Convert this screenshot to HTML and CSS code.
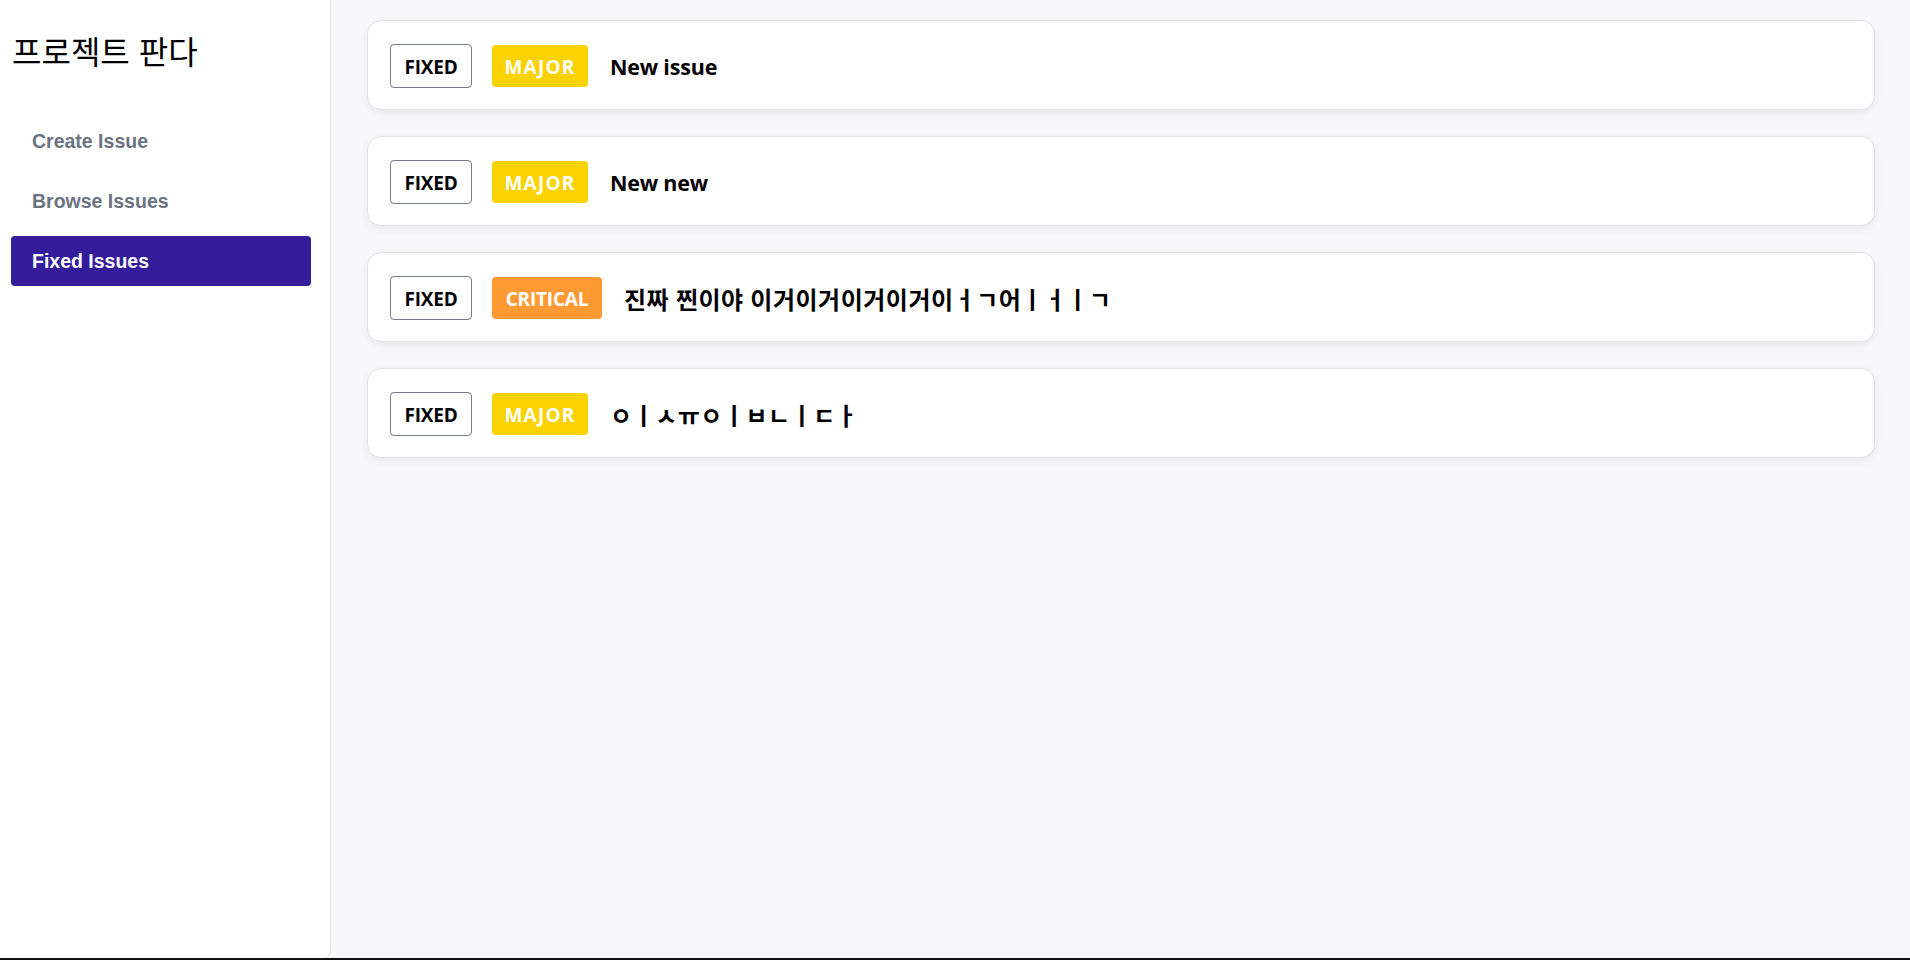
FILE: index.html
```html
<!DOCTYPE html>
<html lang="ko">
<head>
<meta charset="utf-8">
<title>프로젝트 판다</title>
<link rel="stylesheet" href="styles.css">
</head>
<body>
<div class="app">
  <aside class="sidebar">
    <h1 class="brand">프로젝트 판다</h1>
    <nav class="nav">
      <a class="nav-item">Create Issue</a>
      <a class="nav-item">Browse Issues</a>
      <a class="nav-item active">Fixed Issues</a>
    </nav>
  </aside>
  <main class="main">
    <div class="card">
      <span class="badge status">FIXED</span>
      <span class="badge major">MAJOR</span>
      <span class="title">New issue</span>
    </div>
    <div class="card">
      <span class="badge status">FIXED</span>
      <span class="badge major">MAJOR</span>
      <span class="title">New new</span>
    </div>
    <div class="card">
      <span class="badge status">FIXED</span>
      <span class="badge critical">CRITICAL</span>
      <span class="title ko">진짜 찐이야 이거이거이거이거이ㅓㄱ어ㅣㅓㅣㄱ</span>
    </div>
    <div class="card">
      <span class="badge status">FIXED</span>
      <span class="badge major">MAJOR</span>
      <span class="title ko">ㅇㅣㅅㅠㅇㅣㅂㄴㅣㄷㅏ</span>
    </div>
  </main>
</div>
<div class="bottom-rule"></div>
</body>
</html>
```

FILE: styles.css
```css
* { box-sizing: border-box; }
html, body { margin: 0; padding: 0; }
body {
  background: #f8f8fa;
  font-family: "Open Sans", "Noto Sans CJK KR", sans-serif;
  color: #000;
}
.app {
  display: flex;
  height: 958px;
}
.bottom-rule {
  height: 2px;
  background: #111;
}
.sidebar {
  width: 331px;
  flex: none;
  background: #fff;
  border-right: 1px solid #e2e3e8;
  border-bottom-right-radius: 8px;
  padding: 0 19px 0 11px;
}
.brand {
  margin: 31px 0 0 1px;
  font-family: "Noto Sans CJK KR", sans-serif;
  font-size: 32px;
  font-weight: 400;
  line-height: 38px;
  letter-spacing: 0;
}
.nav {
  margin-top: 47px;
  display: flex;
  flex-direction: column;
  gap: 10px;
}
.nav-item {
  display: block;
  height: 50px;
  line-height: 50px;
  padding: 0 21px;
  border-radius: 4px;
  font-family: "Liberation Sans", Arial, sans-serif;
  font-weight: 700;
  font-size: 19.5px;
  color: #6b7280;
}
.nav-item.active {
  background: #341c9c;
  color: #fff;
}
.main {
  flex: 1;
  padding: 20px 35px 0 36px;
  display: flex;
  flex-direction: column;
  gap: 26px;
}
.card {
  height: 90px;
  flex: none;
  background: #fff;
  border: 1px solid #e1e2e8;
  border-radius: 14px;
  box-shadow: 0 3px 8px rgba(0, 0, 0, 0.07);
  padding: 2px 22px 0;
  display: flex;
  align-items: center;
  gap: 20px;
}
.badge {
  display: inline-flex;
  align-items: center;
  justify-content: center;
  border-radius: 4px;
  font-weight: 700;
  font-size: 19px;
  letter-spacing: -0.2px;
  padding-top: 2px;
}
.badge.status {
  height: 44px;
  width: 82px;
  border: 1px solid #767b8e;
  color: #000;
  background: #fff;
}
.badge.major {
  height: 42px;
  width: 96px;
  background: #fad200;
  color: #fff;
  letter-spacing: 1.2px;
}
.badge.critical {
  height: 42px;
  width: 110px;
  background: #ff9a33;
  color: #fff;
}
.title {
  margin-left: 2px;
  font-size: 21.5px;
  font-weight: 700;
  letter-spacing: -0.2px;
}
.title.ko {
  font-size: 24px;
  letter-spacing: 0.5px;
}
```
